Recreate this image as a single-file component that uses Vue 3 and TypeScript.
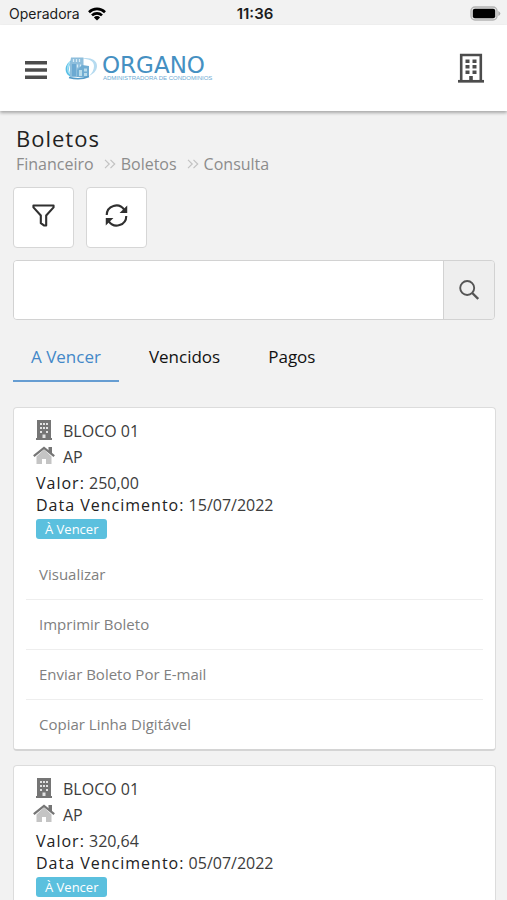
<script setup lang="ts">
import { ref } from 'vue'

interface Boleto {
  id: number
  bloco: string
  unidade: string
  valor: string
  vencimento: string
  situacao: string
}

const trilha: string[] = ['Financeiro', 'Boletos', 'Consulta']
const abas: string[] = ['A Vencer', 'Vencidos', 'Pagos']
const acoes: string[] = ['Visualizar', 'Imprimir Boleto', 'Enviar Boleto Por E-mail', 'Copiar Linha Digitável']

const abaAtiva = ref<string>('A Vencer')
const busca = ref<string>('')

const boletos: Boleto[] = [
  { id: 1, bloco: 'BLOCO 01', unidade: 'AP', valor: '250,00', vencimento: '15/07/2022', situacao: 'À Vencer' },
  { id: 2, bloco: 'BLOCO 01', unidade: 'AP', valor: '320,64', vencimento: '05/07/2022', situacao: 'À Vencer' },
]
</script>

<template>
  <div class="app">
    <div class="status">
      <div class="carrier">
        <span>Operadora</span>
        <svg width="18" height="14" viewBox="0 0 18 14" aria-hidden="true">
          <g fill="none" stroke="#000" stroke-width="2.6">
            <path d="M1 5.2a11.4 11.4 0 0 1 16 0" />
            <path d="M4 8.4a7.1 7.1 0 0 1 10 0" />
          </g>
          <path d="M5.9 10.4a4.4 4.4 0 0 1 6.2 0L9 13.6z" fill="#000" />
        </svg>
      </div>
      <span class="clock">11:36</span>
      <svg class="battery" width="31" height="15" viewBox="0 0 31 15" aria-hidden="true">
        <rect x="1" y="1" width="26" height="13" rx="4" fill="#e6e6e6" stroke="#b4b4b4" stroke-width="1.4" />
        <rect x="2.8" y="2.8" width="22.4" height="9.4" rx="2" fill="#000" />
        <path d="M28.3 5v5q2-1 2-2.500t-2-2.500z" fill="#aaa" />
      </svg>
    </div>

    <header class="header">
      <button class="plain menu" type="button" aria-label="Menu">
        <svg width="22" height="20" viewBox="0 0 22 20" aria-hidden="true">
          <path d="M0 2.800h22M0 10h22M0 17.200h22" stroke="#4c4c4c" stroke-width="3.400" />
        </svg>
      </button>
      <a class="brand" href="#">
        <svg width="34" height="24" viewBox="0 0 34 24" aria-hidden="true">
          <path d="M8 3.500C2 6-1 12 1.500 17c1 2 3 3.500 5 4C3 16 3 9 8 3.500z" fill="#58bfe6" />
          <path d="M5 6c-3 4-3 9 0 12" fill="none" stroke="#a5e0f5" stroke-width="1.500" />
          <path d="M17 2.500c8-1.500 15 1.500 15 7.500 0 5-4 8-8 10 3-3 5-6 5-10 0-5-5-7-12-7.500z" fill="#b6dbf0" />
          <path d="M6 1.500h12.500V21H5V7z" fill="#8ebedc" />
          <path d="M7 8h4v12H7z" fill="#6ca9d2" />
          <path d="M8.500 3v3M11.500 3v3M14.500 3v3M12.500 8.500v3M15.500 8.500v3" stroke="#d7ecf7" stroke-width="1.300" />
          <path d="m12 14 5-5 7 1v11H12z" fill="#71add3" />
          <path d="M14 14h3v6h-3zM19 12.500h3v3h-3zM19 17h3v3h-3z" fill="#b9dceb" />
          <path d="M4 21.500c6 1.500 14 1.500 20-1" fill="none" stroke="#559bc8" stroke-width="1.500" />
        </svg>
        <span class="brand-text">
          <span class="brand-name">ORGANO</span>
          <span class="brand-sub">ADMINISTRADORA DE CONDOMINIOS</span>
        </span>
      </a>
      <button class="plain building" type="button" aria-label="Condomínio">
        <svg width="26" height="30" viewBox="0 0 26 30" aria-hidden="true">
          <path d="M3.200 27V2h19.600v25" fill="none" stroke="#4c4c4c" stroke-width="2.600" />
          <path d="M0 28.300h26" stroke="#4c4c4c" stroke-width="2.700" />
          <path
            d="M7.500 6.500h4v3.500h-4zM14.500 6.500h4v3.500h-4zM7.500 12h4v3.500h-4zM14.500 12h4v3.500h-4zM7.500 17.500h4v3.500h-4zM14.500 17.500h4v3.500h-4zM11.200 23h3.600v5h-3.600z"
            fill="#4c4c4c"
          />
        </svg>
      </button>
    </header>

    <main class="content">
      <h1>Boletos</h1>
      <nav class="crumbs" aria-label="Trilha">
        <template v-for="(item, i) in trilha" :key="item">
          <svg v-if="i > 0" width="12" height="10" viewBox="0 0 12 10" aria-hidden="true">
            <path d="m1 .8 4.200 4.200L1 9.200M6.500.8 10.700 5 6.500 9.200" fill="none" stroke="#c2c2c2" stroke-width="1.200" />
          </svg>
          <a href="#">{{ item }}</a>
        </template>
      </nav>

      <div class="tools">
        <button class="tool" type="button" aria-label="Filtrar">
          <svg width="23" height="23" viewBox="0 0 24 24" aria-hidden="true">
            <path
              d="M1.500 1.500h21v2L14.800 12v10.500h-2L9.200 20v-8L1.500 3.500z"
              fill="none"
              stroke="#303030"
              stroke-width="2.200"
              stroke-linejoin="round"
            />
          </svg>
        </button>
        <button class="tool" type="button" aria-label="Atualizar">
          <svg width="23" height="23" viewBox="0 0 24 24" aria-hidden="true">
            <g fill="none" stroke="#303030" stroke-width="2.200">
              <path d="M1.800 11.500A10 10 0 0 1 20 5.800" />
              <path d="M22.200 12.500A10 10 0 0 1 4 18.200" />
            </g>
            <path d="M23.200 1.500v8h-8zM.8 22.500v-8h8z" fill="#303030" />
          </svg>
        </button>
      </div>

      <form class="search" @submit.prevent>
        <input v-model="busca" type="text" aria-label="Buscar boletos" />
        <button type="submit" aria-label="Buscar">
          <svg width="20" height="20" viewBox="0 0 20 20" aria-hidden="true">
            <circle cx="8.200" cy="8" r="7" fill="none" stroke="#555" stroke-width="1.900" />
            <path d="m13.200 13 6 6" stroke="#555" stroke-width="2.400" />
          </svg>
        </button>
      </form>

      <div class="tabs" role="tablist">
        <button
          v-for="aba in abas"
          :key="aba"
          type="button"
          role="tab"
          class="tab"
          :class="{ active: aba === abaAtiva }"
          :aria-selected="aba === abaAtiva"
          @click="abaAtiva = aba"
        >
          {{ aba }}
        </button>
      </div>

      <article v-for="b in boletos" :key="b.id" class="card">
        <div class="info">
          <div class="place">
            <svg width="22" height="20" viewBox="0 0 22 20" aria-hidden="true">
              <path d="M4 0h14v18H4zM3 18h16v2H3z" fill="#757575" />
              <path
                d="M7 3h2v2H7zM10 3h2v2h-2zM13 3h2v2h-2zM7 7h2v2H7zM10 7h2v2h-2zM13 7h2v2h-2zM7 11h2v2H7zM13 11h2v2h-2zM9.500 14.500h3V18h-3z"
                fill="#e2e2e2"
              />
            </svg>
            <span>{{ b.bloco }}</span>
          </div>
          <div class="place">
            <svg width="22" height="20" viewBox="0 0 22 20" aria-hidden="true">
              <path d="m3.500 10.500 7.500-7 7.500 7V18H13v-5H9v5H3.500z" fill="#c4c4c4" />
              <path d="M15.500 1H19v7l-3.500-3z" fill="#757575" />
              <path d="M.8 10.200 11 1.800l10.200 8.400" fill="none" stroke="#757575" stroke-width="2.200" />
            </svg>
            <span>{{ b.unidade }}</span>
          </div>
          <div class="row"><b>Valor:</b> {{ b.valor }}</div>
          <div class="row"><b>Data Vencimento:</b> {{ b.vencimento }}</div>
          <span class="badge">{{ b.situacao }}</span>
        </div>
        <ul class="actions">
          <li v-for="acao in acoes" :key="acao">
            <a href="#">{{ acao }}</a>
          </li>
        </ul>
      </article>
    </main>
  </div>
</template>

<style>
body {
  background: #f2f2f2;
}
</style>

<style scoped>
.app,
.app * {
  box-sizing: border-box;
}

.app {
  display: flex;
  flex-direction: column;
  height: 100vh;
  color: #333;
  font-family: 'Open Sans', 'Noto Sans', sans-serif;
  font-size: 16px;
}

button,
input {
  margin: 0;
  padding: 0;
  font: inherit;
}

a {
  color: inherit;
  text-decoration: none;
}

svg {
  display: block;
  flex: none;
}

.status {
  display: grid;
  grid-template-columns: 1fr auto 1fr;
  align-items: center;
  flex: none;
  height: 25px;
  padding: 2px 6px 0 9px;
  color: #1c1c1c;
  font-family: Inter, sans-serif;
  font-size: 14px;
}

.carrier {
  display: flex;
  align-items: center;
  gap: 8px;
}

.clock {
  font-size: 15px;
  font-weight: 600;
}

.battery {
  justify-self: end;
}

.header {
  display: flex;
  align-items: center;
  flex: none;
  height: 86px;
  padding: 0 23px 0 25px;
  background: #fff;
  box-shadow: 0 2px 3px rgba(0, 0, 0, 0.3);
  z-index: 1;
}

.plain {
  border: 0;
  background: none;
}

.menu {
  padding-top: 4px;
}

.building {
  margin-left: auto;
}

.brand {
  display: flex;
  align-items: center;
  gap: 3px;
  margin-left: 18px;
}

.brand-text {
  display: flex;
  flex-direction: column;
}

.brand-name {
  color: #4590c2;
  font-family: 'DejaVu Sans', sans-serif;
  font-size: 23px;
  line-height: 20px;
}

.brand-sub {
  padding-left: 1px;
  color: #6dabd3;
  font-family: 'Liberation Sans', sans-serif;
  font-size: 6px;
  line-height: 6px;
}

.content {
  flex: 1;
  min-height: 0;
  padding: 12px 11px 0 13px;
  overflow-y: auto;
  scrollbar-width: none;
}

h1 {
  margin: 0;
  padding-left: 3px;
  color: #222;
  font-size: 22px;
  font-weight: 400;
  letter-spacing: 1px;
  line-height: 30px;
}

.crumbs {
  display: flex;
  align-items: center;
  gap: 5px;
  padding-left: 3px;
  color: #8c8c8c;
  line-height: 22px;
}

.crumbs svg {
  margin-left: 5px;
}

.tools {
  display: flex;
  gap: 12px;
  margin-top: 12px;
}

.tool {
  display: grid;
  place-items: center;
  width: 61px;
  height: 61px;
  padding-bottom: 4px;
  border: 1px solid #d6d6d6;
  border-radius: 4px;
  background: #fff;
}

.search {
  display: flex;
  height: 60px;
  margin: 12px 1px 0 0;
  border: 1px solid #d2d2d2;
  border-radius: 4px;
  overflow: hidden;
}

.search input {
  flex: 1;
  min-width: 0;
  padding: 0 12px;
  border: 0;
  background: #fff;
}

.search button {
  display: grid;
  place-items: center;
  width: 51px;
  border: 0;
  border-left: 1px solid #d2d2d2;
  background: #eee;
}

.tabs {
  display: flex;
  gap: 12px;
  margin-top: 12px;
}

.tab {
  height: 50px;
  padding: 0 18px;
  border: 0;
  border-bottom: 2px solid transparent;
  background: none;
  color: #111;
  font-size: 17px;
}

.tab.active {
  border-bottom-color: #669dd2;
  color: #4388c8;
}

.card {
  margin-top: 14px;
  padding: 12px;
  padding-bottom: 0;
  border: 1px solid #dcdcdc;
  border-bottom: 2px solid #d4d4d4;
  border-radius: 4px;
  background: #fff;
}

.tabs + .card {
  margin-top: 25px;
}

.info {
  padding-left: 10px;
  color: #3c3c3c;
  line-height: 22px;
}

.place {
  display: flex;
  gap: 8px;
  height: 26px;
  margin-left: -3px;
}

.row b {
  color: #222;
  font-weight: 500;
  letter-spacing: 1px;
}

.badge {
  display: block;
  width: fit-content;
  margin-top: 3px;
  padding: 0 9px;
  border-radius: 3px;
  background: #5bc0de;
  color: #fff;
  font-size: 13px;
  line-height: 20px;
}

.actions {
  margin: 11px 0 0;
  padding: 0;
  list-style: none;
}

.actions li + li {
  border-top: 1px solid #eee;
}

.actions a {
  display: block;
  padding: 0 13px;
  color: #808080;
  font-size: 15px;
  line-height: 49px;
}
</style>
